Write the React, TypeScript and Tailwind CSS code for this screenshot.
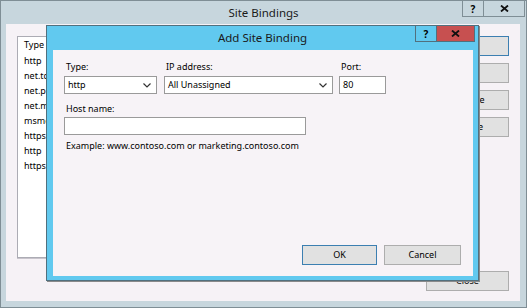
import React from 'react';

const font = { fontFamily: '"Noto Sans", "Segoe UI", sans-serif' };

const CloseGlyph: React.FC = () => (
  <svg width="9" height="7" viewBox="0 0 9 7">
    <path d="M1 0.5 L8 6.5 M8 0.5 L1 6.5" stroke="#111" strokeWidth="1.8" fill="none" />
  </svg>
);

const Chevron: React.FC = () => (
  <svg width="8" height="5" viewBox="0 0 8 5">
    <polyline points="0.5,0.5 4,4 7.5,0.5" stroke="#333" strokeWidth="1.2" fill="none" />
  </svg>
);

// Plain Win8 style push button
const PushButton: React.FC<{ label: string; primary?: boolean; className?: string }> = ({ label, primary, className }) => (
  <div
    className={`h-[20px] flex items-center justify-center bg-[#e1e1e1] border text-[9px] text-black ${
      primary ? 'border-[#3c7fb1]' : 'border-[#adadad]'
    } ${className ?? ''}`}
  >
    {label}
  </div>
);

const bindings = ['http', 'net.tcp', 'net.pipe', 'net.msmq', 'msmq.formatname', 'https', 'http', 'https'];

const App: React.FC = () => {
  return (
    <div style={font} className="w-[527px] h-[308px] relative flex flex-col bg-[#c7d6dd] border border-[#7f8e95] overflow-hidden">
      {/* Site Bindings title bar */}
      <div className="h-[23px] grid grid-cols-[1fr_auto_1fr]">
        <div />
        <div className="text-[11.5px] leading-[23px] text-[#1a1a1a]">Site Bindings</div>
        <div className="flex justify-end items-start -mt-px mr-px">
          <div className="w-[22px] h-[17px] border border-[#7f8e95] flex items-center justify-center text-[10px] font-bold leading-none">?</div>
          <div className="w-[41px] h-[17px] border border-l-0 border-[#7f8e95] flex items-center justify-center">
            <CloseGlyph />
          </div>
        </div>
      </div>

      {/* Site Bindings client area */}
      <div className="flex-1 ml-[5px] mr-[6px] mb-[6px] bg-[#f6f2f6] flex gap-[11px] pl-[11px] pr-[11px] pt-[12px] pb-[10px]">
        <div className="flex-1 h-[222px] bg-white border border-[#acacb4] shadow-[0_1px_0_#c8c4cc] text-[9px] text-black">
          <div className="h-[16px] flex items-center pl-[6px]">
            <span>Type</span>
          </div>
          {bindings.map((b, i) => (
            <div key={i} className="h-[15px] flex items-center pl-[6px]">
              {b}
            </div>
          ))}
        </div>
        <div className="w-[83px] flex flex-col justify-between">
          <div className="flex flex-col gap-[7px]">
            <PushButton label="Add..." primary />
            <PushButton label="Edit..." />
            <PushButton label="Remove" />
            <PushButton label="Browse" />
          </div>
          <PushButton label="Close" />
        </div>
      </div>

      {/* Add Site Binding modal dialog */}
      <div className="absolute left-[45px] top-[24px] w-[433px] h-[256px] flex flex-col bg-[#61c9ef] border border-[#51707e] shadow-[1px_1px_0_#8a8a8a]">
        <div className="h-[24px] grid grid-cols-[1fr_auto_1fr]">
          <div />
          <div className="text-[11.5px] leading-[24px] text-[#1a1a1a]">Add Site Binding</div>
          <div className="flex justify-end items-start -mt-px mr-[3px]">
            <div className="w-[22px] h-[17px] border border-[#51707e] flex items-center justify-center text-[10px] font-bold leading-none">?</div>
            <div className="w-[38px] h-[17px] bg-[#c75050] border border-l-0 border-[#51707e] flex items-center justify-center">
              <CloseGlyph />
            </div>
          </div>
        </div>

        <div className="flex-1 ml-[6px] mr-[5px] mb-[4px] bg-[#f7f3f7] flex flex-col pl-[11px] pr-[12px] pt-[10px] pb-[11px] text-[9px] text-black">
          <div className="flex gap-[7px]">
            <div className="w-[93px] flex flex-col">
              <div className="h-[14px] leading-[14px] pl-[2px] mb-[2px]">Type:</div>
              <div className="h-[18px] bg-white border border-[#9a9a9a] flex items-center justify-between pl-[3px] pr-[5px]">
                <span>http</span>
                <Chevron />
              </div>
            </div>
            <div className="w-[169px] flex flex-col">
              <div className="h-[14px] leading-[14px] pl-[2px] mb-[2px]">IP address:</div>
              <div className="h-[18px] bg-white border border-[#9a9a9a] flex items-center justify-between pl-[3px] pr-[5px]">
                <span>All Unassigned</span>
                <Chevron />
              </div>
            </div>
            <div className="w-[47px] flex flex-col -ml-px">
              <div className="h-[14px] leading-[14px] pl-[2px] mb-[2px]">Port:</div>
              <div className="h-[18px] bg-white border border-[#9a9a9a] flex items-center pl-[3px]">80</div>
            </div>
          </div>

          <div className="h-[14px] leading-[14px] pl-[2px] mt-[8px] mb-[1px]">Host name:</div>
          <div className="w-[242px] h-[18px] bg-white border border-[#9a9a9a]" />
          <div className="h-[14px] leading-[14px] pl-[2px] mt-[4px]">Example: www.contoso.com or marketing.contoso.com</div>

          <div className="mt-auto flex justify-end gap-[7px]">
            <PushButton label="OK" primary className="w-[75px]" />
            <PushButton label="Cancel" className="w-[77px]" />
          </div>
        </div>
      </div>
    </div>
  );
};

export default App;
